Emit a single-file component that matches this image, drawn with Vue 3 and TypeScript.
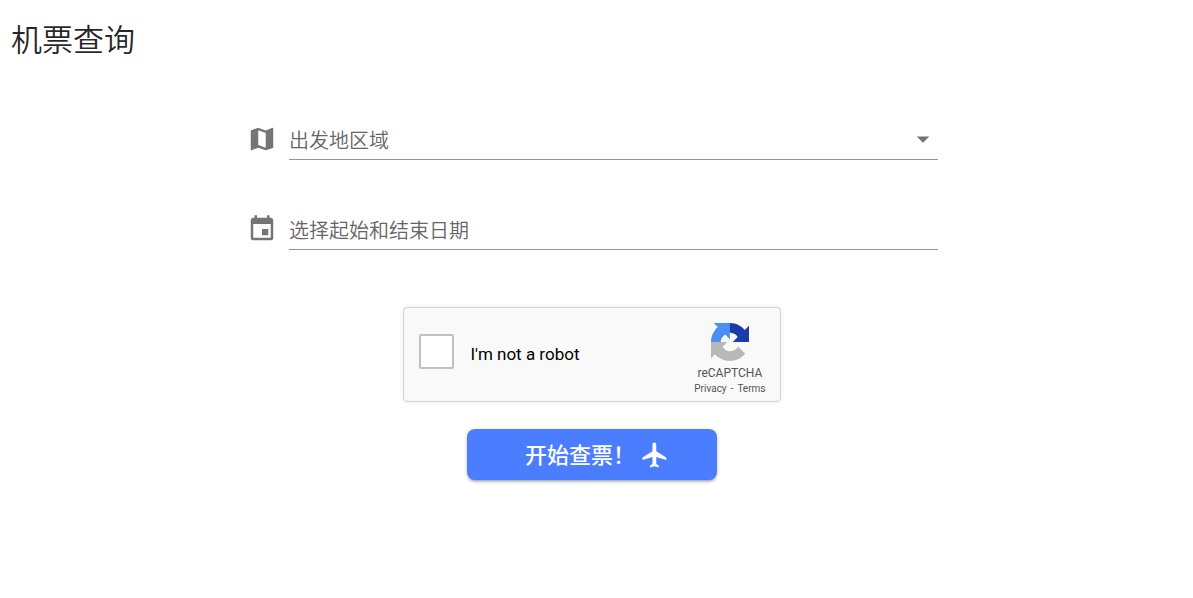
<script setup lang="ts">
import { ref } from 'vue'

const region = ref('')
const dates = ref('')
const human = ref(false)
const regions: string[] = ['亚洲', '欧洲', '北美洲', '大洋洲']
</script>

<template>
  <main class="page">
    <h1 class="title">机票查询</h1>
    <form class="form" @submit.prevent>
      <div class="field">
        <label class="field-icon" for="region" aria-label="出发地区域">
          <svg viewBox="0 0 24 24" aria-hidden="true">
            <path d="M15,19L9,16.89V5L15,7.11M20.5,3C20.44,3 20.39,3 20.34,3L15,5.1L9,3L3.36,4.9C3.15,4.97 3,5.15 3,5.38V20.5A0.5,0.5 0 0,0 3.5,21C3.55,21 3.61,21 3.66,20.97L9,18.9L15,21L20.64,19.1C20.85,19 21,18.85 21,18.62V3.5A0.5,0.5 0 0,0 20.5,3Z" />
          </svg>
        </label>
        <div class="control">
          <select id="region" v-model="region">
            <option value="" disabled>出发地区域</option>
            <option v-for="item in regions" :key="item" :value="item">{{ item }}</option>
          </select>
          <svg class="arrow" viewBox="0 0 24 24" aria-hidden="true"><path d="M7,10L12,15L17,10H7Z" /></svg>
        </div>
      </div>

      <div class="field">
        <label class="field-icon" for="dates" aria-label="选择起始和结束日期">
          <svg viewBox="0 0 24 24" aria-hidden="true">
            <path d="M19,19H5V8H19M16,1V3H8V1H6V3H5C3.89,3 3,3.89 3,5V19A2,2 0 0,0 5,21H19A2,2 0 0,0 21,19V5C21,3.89 20.1,3 19,3H18V1M17,12H12V17H17V12Z" />
          </svg>
        </label>
        <div class="control">
          <input id="dates" v-model="dates" type="text" placeholder="选择起始和结束日期" />
        </div>
      </div>

      <div class="captcha">
        <input id="human" v-model="human" type="checkbox" />
        <label class="captcha-label" for="human">I'm not a robot</label>
        <div class="brand">
          <svg class="logo" viewBox="0 0 64 64" aria-hidden="true">
            <path fill="#1c3aa9" d="M64 31.955l-.033-1.37V4.687l-7.16 7.16C50.948 4.674 42.033.093 32.05.093c-10.4 0-19.622 4.96-25.458 12.64l11.736 11.86a15.55 15.55 0 0 1 4.754-5.334c2.05-1.6 4.952-2.906 8.968-2.906.485 0 .86.057 1.135.163 4.976.393 9.288 3.14 11.828 7.124l-8.307 8.307L64 31.953" />
            <path fill="#4a8ff7" d="M31.862.094l-1.37.033H4.594l7.16 7.16C4.58 13.147 0 22.06 0 32.046c0 10.4 4.96 19.622 12.64 25.458L24.5 45.768a15.55 15.55 0 0 1-5.334-4.754c-1.6-2.05-2.906-4.952-2.906-8.968 0-.485.057-.86.163-1.135.393-4.976 3.14-9.288 7.124-11.828l8.307 8.307L31.86.095" />
            <path fill="#b8b8b8" d="M.001 32.045l.033 1.37v25.898l7.16-7.16c5.86 7.173 14.774 11.754 24.76 11.754 10.4 0 19.622-4.96 25.458-12.64l-11.736-11.86a15.55 15.55 0 0 1-4.754 5.334c-2.05 1.6-4.952 2.906-8.968 2.906-.485 0-.86-.057-1.135-.163-4.976-.393-9.288-3.14-11.828-7.124l8.307-8.307c-10.522.04-22.4.066-27.295-.005" />
          </svg>
          <span class="brand-name">reCAPTCHA</span>
          <span class="links"><a href="#privacy">Privacy</a><span>-</span><a href="#terms">Terms</a></span>
        </div>
      </div>

      <button class="submit" type="submit">
        <span>开始查票！</span>
        <svg viewBox="0 0 24 24" aria-hidden="true">
          <path d="M21,16V14L13,9V3.5A1.5,1.5 0 0,0 11.5,2A1.5,1.5 0 0,0 10,3.5V9L2,14V16L10,13.5V19L8,20.5V22L11.5,21L15,22V20.5L13,19V13.5L21,16Z" />
        </svg>
      </button>
    </form>
  </main>
</template>

<style>
body {
  margin: 0;
  background: #fff;
}
</style>

<style scoped>
.page {
  box-sizing: border-box;
  padding: 20px 8px 40px 0;
  font-family: Roboto, "Noto Sans CJK SC", sans-serif;
  color: rgba(0, 0, 0, 0.87);
}
.title {
  margin: 0;
  padding: 1px 0 0 11px;
  font-size: 31px;
  line-height: 40px;
  font-weight: 350;
}
.form {
  display: flex;
  flex-direction: column;
  align-items: center;
  width: 58.33%;
  margin: 59px auto 0;
}
.field {
  display: flex;
  align-items: flex-start;
  gap: 12px;
  width: 100%;
  margin-bottom: 50px;
}
.field-icon {
  flex: none;
  width: 30px;
  height: 30px;
  margin-top: 4px;
}
.field-icon svg {
  display: block;
  fill: #757575;
}
.control {
  position: relative;
  flex: 1;
  border-bottom: 1px solid #949494;
}
.control select,
.control input {
  display: block;
  box-sizing: border-box;
  width: 100%;
  height: 39px;
  margin: 0;
  padding: 2px 0 0;
  border: 0;
  outline: 0;
  appearance: none;
  background: transparent;
  color: #666;
  font: 350 20px/30px Roboto, "Noto Sans CJK SC", sans-serif;
}
.control input::placeholder {
  color: #666;
  opacity: 1;
}
.arrow {
  position: absolute;
  top: 4px;
  right: 0;
  width: 30px;
  height: 30px;
  fill: #757575;
  pointer-events: none;
}
.captcha {
  display: flex;
  align-items: center;
  box-sizing: border-box;
  width: 378px;
  max-width: 100%;
  height: 95px;
  margin-top: 7px;
  padding: 0 15px;
  border: 1px solid #d3d3d3;
  border-radius: 4px;
  background: #f9f9f9;
  box-shadow: 0 0 5px rgba(0, 0, 0, 0.08);
  color: #000;
}
.captcha input {
  flex: none;
  box-sizing: border-box;
  width: 35px;
  height: 35px;
  margin: 0 16px 6px 0;
  border: 2px solid #c1c1c1;
  border-radius: 2px;
  appearance: none;
  background: #fff;
}
.captcha input:checked {
  background: #4285f4;
}
.captcha-label {
  flex: 1;
  margin-bottom: 2px;
  font-size: 17px;
  line-height: 22px;
}
.brand {
  display: flex;
  flex-direction: column;
  align-items: center;
  color: #555;
}
.logo {
  width: 38px;
  height: 38px;
  margin-top: 10px;
}
.brand-name {
  margin-top: 4px;
  font-size: 12px;
  line-height: 16px;
}
.links {
  display: flex;
  gap: 4px;
  font-size: 10px;
  line-height: 16px;
}
.links a {
  color: #555;
  text-decoration: none;
}
.submit {
  display: flex;
  align-items: center;
  justify-content: center;
  gap: 5px;
  width: 250px;
  height: 51px;
  margin: 27px 0 0;
  padding: 0 0 0 10px;
  border: 0;
  border-radius: 8px;
  background: #4a7dff;
  box-shadow: 0 3px 2px -2px rgba(0, 0, 0, 0.2), 0 2px 3px rgba(0, 0, 0, 0.14), 0 1px 5px rgba(0, 0, 0, 0.12);
  color: #fff;
  font: 500 22px/32px Roboto, "Noto Sans CJK SC", sans-serif;
}
.submit span {
  padding-top: 2px;
}
.submit svg {
  width: 30px;
  height: 30px;
  fill: currentColor;
}
</style>
